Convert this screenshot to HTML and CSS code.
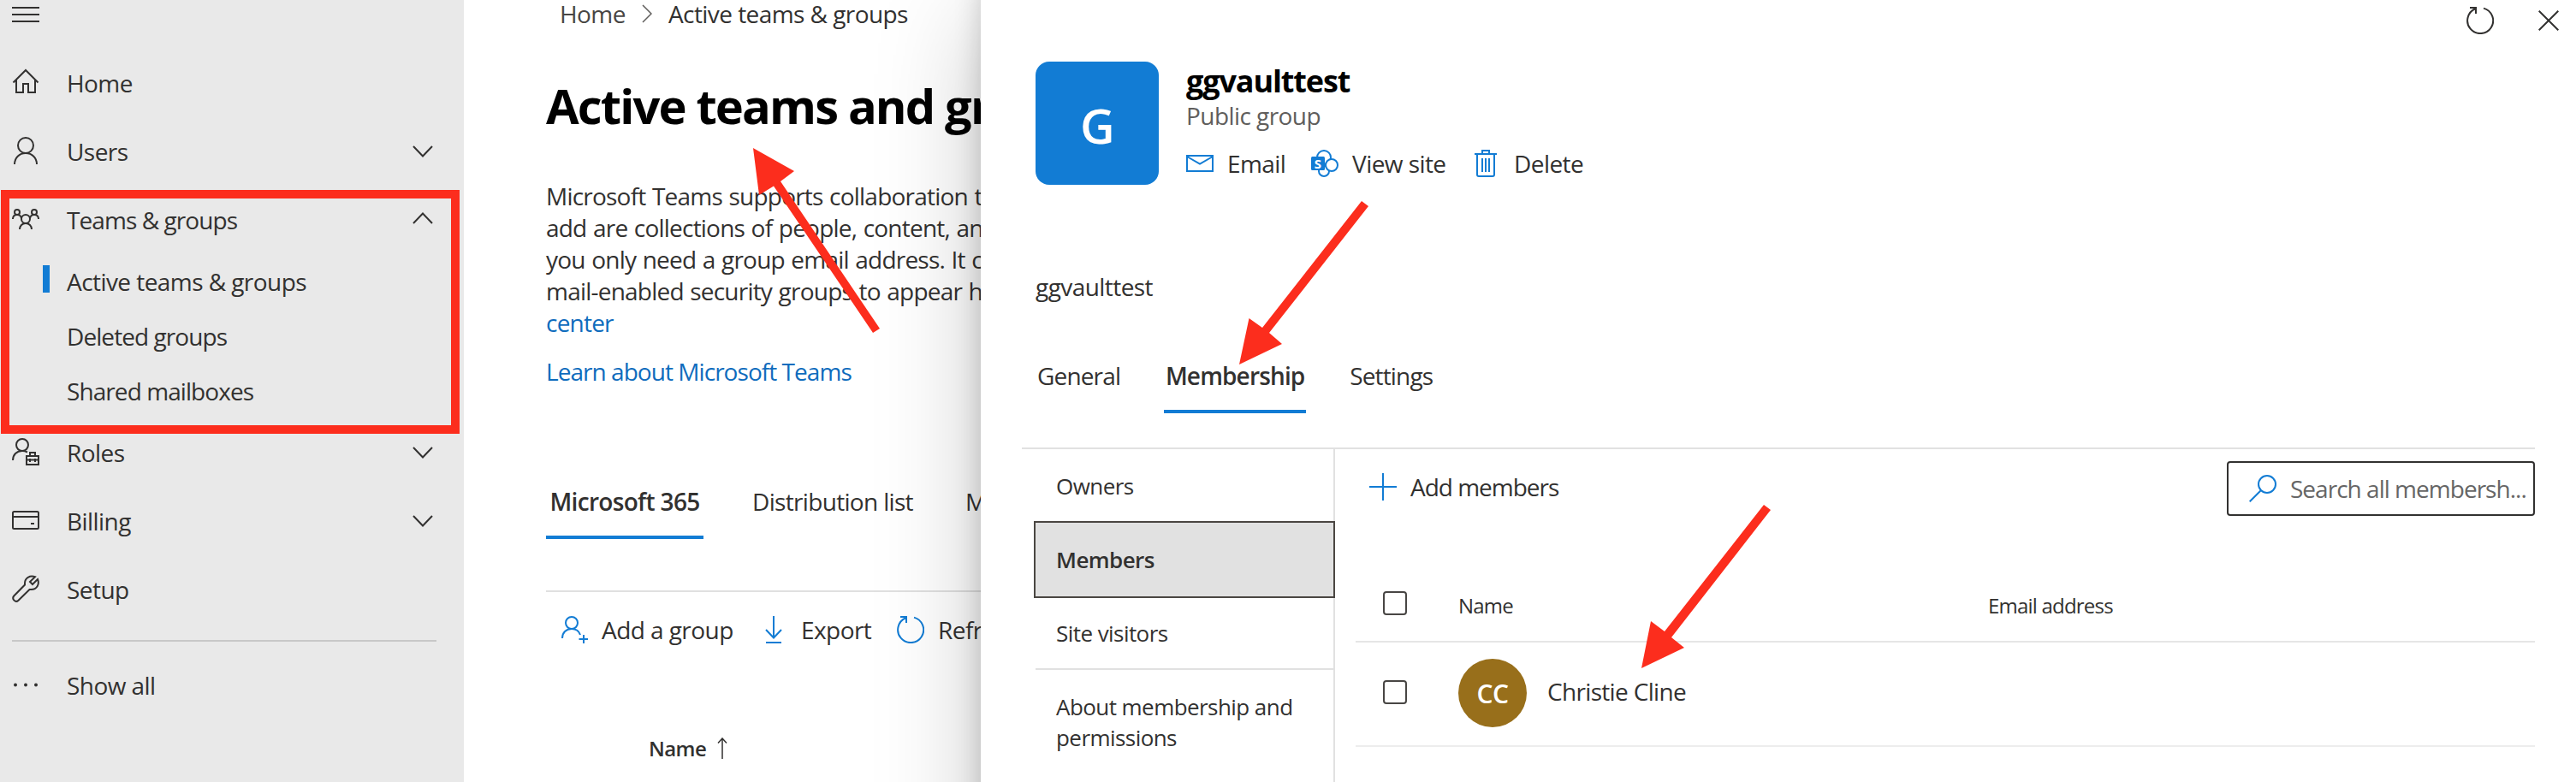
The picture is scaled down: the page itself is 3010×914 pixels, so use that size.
FILE: index.html
```html
<!DOCTYPE html>
<html lang="en">
<head>
    <meta charset="utf-8">
    <title>Active teams &amp; groups</title>
    <link rel="stylesheet" href="styles.css">
</head>
<body>
    <div class="app">
        <nav class="sidebar">
            <div class="menu-btn">
                <svg width="32" height="18"><path d="M0 1h32M0 9h32M0 17h32"/></svg>
            </div>
            <a class="nav-item">
                <svg class="nav-icon" width="32" height="32" viewBox="0 0 32 32"><path d="M1.500 16.500L16 2l14.500 14.500M5 13.500V28h8V18h6v10h8V13.500"/></svg>
                <span>Home</span>
            </a>
            <a class="nav-item">
                <svg class="nav-icon" width="32" height="32" viewBox="0 0 32 32"><circle cx="16" cy="10" r="9"/><path d="M3 32c0-7.500 5.500-13 13-13s13 5.500 13 13"/></svg>
                <span>Users</span>
                <svg class="chevron" width="24" height="14" viewBox="0 0 24 14"><path d="M1 1l11 11.500L23 1"/></svg>
            </a>
            <a class="nav-item">
                <svg class="nav-icon" width="32" height="32" viewBox="0 0 32 32"><circle cx="6" cy="8" r="3"/><circle cx="26" cy="8" r="3"/><circle cx="16" cy="16" r="5"/><path d="M1 16c0-3 2-5 5-5s4.500 1.500 5 4M31 16c0-3-2-5-5-5s-4.500 1.500-5 4M9 28c0-4 3-7 7-7s7 3 7 7"/></svg>
                <span class="tight">Teams &amp; groups</span>
                <svg class="chevron up" width="24" height="14" viewBox="0 0 24 14"><path d="M1 13L12 1.500 23 13"/></svg>
            </a>
            <a class="nav-sub active">Active teams &amp; groups</a>
            <a class="nav-sub tight">Deleted groups</a>
            <a class="nav-sub tight">Shared mailboxes</a>
            <a class="nav-item">
                <svg class="nav-icon" width="32" height="32" viewBox="0 0 32 32"><circle cx="12" cy="8" r="7"/><path d="M1 26c0-6.500 4.500-11 11-11 2.200 0 4 .5 6 1.500"/><path d="M17 21h14v10H17zM21 21v-4h6v4M17 25.500h14M21 24v4M27 24v4"/></svg>
                <span>Roles</span>
                <svg class="chevron" width="24" height="14" viewBox="0 0 24 14"><path d="M1 1l11 11.500L23 1"/></svg>
            </a>
            <a class="nav-item">
                <svg class="nav-icon" width="32" height="32" viewBox="0 0 32 32"><rect x="1" y="6" width="30" height="20" rx="1.500"/><path d="M1 12h30M22 20h4"/></svg>
                <span>Billing</span>
                <svg class="chevron" width="24" height="14" viewBox="0 0 24 14"><path d="M1 1l11 11.500L23 1"/></svg>
            </a>
            <a class="nav-item">
                <svg class="nav-icon" width="32" height="32" viewBox="0 0 32 32"><path d="M27 2.200C21 0 15 3.500 15 9.500v2L2.300 24.500c-3 3.500 1.700 8.500 5.200 5.200L20.500 17h2c6.500 0 10-6 7.500-12l-6 6-3-3z"/></svg>
                <span>Setup</span>
            </a>
            <div class="divider"></div>
            <a class="nav-item">
                <svg class="nav-icon dots" width="32" height="32" viewBox="0 0 32 32"><circle cx="4" cy="16.500" r="2"/><circle cx="16" cy="16.500" r="2"/><circle cx="28" cy="16.500" r="2"/></svg>
                <span>Show all</span>
            </a>
        </nav>

        <main class="main">
            <div class="breadcrumb">
                <span class="crumb">Home</span>
                <svg width="12" height="22" viewBox="0 0 12 22"><path d="M1 1l10 10L1 21"/></svg>
                <span>Active teams &amp; groups</span>
            </div>
            <h1>Active teams and groups</h1>
            <p class="intro">
                Microsoft Teams supports collaboration through<br>
                add are collections of people, content, and tools<br>
                you only need a group email address. It can take<br>
                mail-enabled security groups to appear here<br>
                <a>center</a>
            </p>
            <a class="learn">Learn about Microsoft Teams</a>
            <div class="tabs">
                <span class="tab selected">Microsoft 365</span>
                <span class="tab">Distribution list</span>
                <span class="tab">Mail-enabled security</span>
            </div>
            <div class="toolbar">
                <svg width="32" height="32" viewBox="0 0 32 32"><circle cx="13" cy="8" r="7"/><path d="M2 26c0-6.500 4.500-11 11-11 5 0 8.500 2.500 10 7M27 22v10M21.500 27h11"/></svg>
                <span class="t-add">Add a group</span>
                <svg width="20" height="32" viewBox="0 0 20 32"><path d="M10 0v25M1 16l9 9.500 9-9.500M1 31h18"/></svg>
                <span class="t-export">Export</span>
                <svg width="32" height="32" viewBox="0 0 32 32"><path d="M20 1.600A15 15 0 1 1 10.500 2.200M4 1h7v7"/></svg>
                <span>Refresh</span>
            </div>
            <div class="list-head">
                <span>Name</span>
                <svg width="12" height="25" viewBox="0 0 12 25"><path d="M6 25V1M1 6.500L6 1l5 5.500"/></svg>
            </div>
        </main>

        <section class="panel">
            <div class="panel-top">
                <svg width="32" height="32" viewBox="0 0 32 32"><path d="M20 1.600A15 15 0 1 1 10.500 2.200M4 1h7v7"/></svg>
                <svg width="24" height="24" viewBox="0 0 24 24"><path d="M.7.700l22.600 22.600M23.300.7L.7 23.300"/></svg>
            </div>
            <div class="hero">
                <div class="logo">G</div>
                <div>
                    <h2>ggvaulttest</h2>
                    <div class="kind">Public group</div>
                    <div class="actions">
                        <svg width="32" height="32" viewBox="0 0 32 32"><path d="M1 7h30v18H1zM1 8l15 8.500L31 8"/></svg>
                        <span class="a-email">Email</span>
                        <svg width="32" height="32" viewBox="0 0 32 32"><circle cx="15" cy="9" r="8"/><circle cx="15" cy="25" r="6"/><circle cx="24" cy="18" r="7"/><rect class="sp-box" x="0" y="8" width="16" height="16" rx="1.500"/><text x="3.800" y="21.500">S</text></svg>
                        <span class="a-site">View site</span>
                        <svg width="26" height="32" viewBox="0 0 26 32"><path d="M0 5h26M9 5V1h8v4M3 5v24q0 2 2 2h16q2 0 2-2V5M9 10v16M13 10v16M17 10v16"/></svg>
                        <span class="a-delete">Delete</span>
                    </div>
                </div>
            </div>
            <p class="group-desc">ggvaulttest</p>
            <div class="tabs panel-tabs">
                <span class="tab">General</span>
                <span class="tab selected">Membership</span>
                <span class="tab">Settings</span>
            </div>
            <div class="panel-body">
                <div class="side">
                    <a>Owners</a>
                    <a class="current">Members</a>
                    <a class="last">Site visitors</a>
                    <a class="about">About membership and permissions</a>
                </div>
                <div class="content">
                    <div class="commands">
                        <div class="add-members">
                            <svg width="32" height="32" viewBox="0 0 32 32"><path d="M16 0v32M0 16h32"/></svg>
                            <span>Add members</span>
                        </div>
                        <div class="search">
                            <svg width="32" height="32" viewBox="0 0 32 32"><circle cx="21" cy="11" r="10"/><path d="M14 18L.7 31.300"/></svg>
                            <span>Search all membersh...</span>
                        </div>
                    </div>
                    <div class="row head">
                        <i class="checkbox"></i>
                        <div class="col-name">Name</div>
                        <div>Email address</div>
                    </div>
                    <div class="row">
                        <i class="checkbox"></i>
                        <div class="col-name">
                            <span class="persona">CC</span>
                            <span class="person">Christie Cline</span>
                        </div>
                    </div>
                </div>
            </div>
        </section>

        <!-- callouts -->
        <div class="highlight"></div>
        <svg class="arrows" width="3010" height="914" viewBox="0 0 3010 914">
            <polygon points="880,173 928,200 912,212 1028,384 1020,389 904,217.500 887,228"/>
            <polygon points="1591,235 1599,241 1483,389 1498,402 1448,426 1459.500,372 1475,383"/>
            <polygon points="2061,590 2069,596 1953,745 1968,757 1918,781 1929,726 1945,738"/>
        </svg>
    </div>
</body>
</html>
```
FILE: styles.css
```css
* {
    box-sizing: border-box;
}
body {
    margin: 0;
    background: #fff;
    color: #323130;
    font-family: "Open Sans", "Noto Sans", sans-serif;
    font-size: 28px;
    letter-spacing: -0.02em;
    overflow: hidden;
}
svg {
    display: block;
    flex: none;
    fill: none;
    stroke: #323130;
    stroke-width: 2;
}
h1, h2, p {
    margin: 0;
}
.app {
    position: relative;
    display: flex;
    width: 3010px;
    height: 914px;
    overflow: hidden;
    white-space: nowrap;
}

/* left navigation */
.sidebar {
    width: 542px;
    flex: none;
    background: #e9e9e9;
}
.menu-btn {
    height: 57px;
    padding: 8px 14px;
}
.nav-item {
    display: flex;
    align-items: center;
    height: 80px;
    padding: 0 36px 0 14px;
}
.nav-item .nav-icon {
    margin: -2px 32px 0 0;
}
.nav-item .chevron {
    margin-left: auto;
}
.nav-item .chevron.up {
    margin-top: -4px;
}
.nav-sub {
    display: flex;
    align-items: center;
    height: 64px;
    padding-left: 78px;
}
.tight {
    letter-spacing: -0.033em;
}
.nav-sub.active {
    position: relative;
}
.nav-sub.active::before {
    content: "";
    position: absolute;
    left: 50px;
    top: 13px;
    width: 8px;
    height: 32px;
    background: #127cd4;
}
.dots {
    fill: #323130;
    stroke: none;
}
.divider {
    height: 2px;
    margin: 19px 32px 11px 14px;
    background: #c8c8c8;
}

/* page behind the panel */
.main {
    width: 604px;
    flex: none;
    padding-left: 96px;
    overflow: hidden;
}
.breadcrumb {
    display: flex;
    align-items: center;
    height: 32px;
    padding-left: 16px;
    line-height: 32px;
}
.breadcrumb svg {
    margin: 0 19px;
    stroke: #605e5c;
    stroke-width: 1.5;
}
.crumb {
    color: #484644;
}
h1 {
    margin-top: 55px;
    font-size: 56px;
    line-height: 72px;
    letter-spacing: -0.033em;
    color: #000;
}
.intro {
    margin-top: 52px;
    line-height: 37px;
    letter-spacing: -0.028em;
    word-spacing: 1px;
}
.intro a, .learn {
    color: #0f6cbd;
}
.learn {
    display: block;
    margin-top: 20px;
    line-height: 37px;
    letter-spacing: -0.034em;
}
.tabs {
    display: flex;
    gap: 53px;
    margin-top: 89px;
    letter-spacing: -0.024em;
}
.tab {
    flex: none;
    height: 88px;
    line-height: 88px;
    padding: 0 4px;
}
.tab.selected {
    position: relative;
    width: 184px;
    padding: 0;
    font-weight: 600;
    text-align: center;
}
.tab.selected::after {
    content: "";
    position: absolute;
    left: 0;
    right: 0;
    bottom: 0;
    height: 4px;
    background: #127cd4;
}
.toolbar {
    display: flex;
    align-items: center;
    height: 90px;
    margin-top: 60px;
    padding-left: 17px;
    border-top: 2px solid #e0e0e0;
}
.toolbar svg {
    stroke: #127cd4;
}
.toolbar span {
    flex: none;
    margin-left: 16px;
}
.toolbar .t-add {
    width: 191px;
}
.toolbar .t-export {
    width: 112px;
    margin-left: 22px;
}
.list-head {
    display: flex;
    align-items: center;
    gap: 13px;
    height: 80px;
    margin-top: 54px;
    padding-left: 120px;
    font-size: 24px;
    font-weight: 600;
}
.list-head svg {
    stroke-width: 1.5;
}

/* group details panel */
.panel {
    position: absolute;
    left: 1146px;
    right: 0;
    top: -32px;
    height: 1100px;
    padding: 32px 48px 0;
    background: #fff;
    box-shadow: 0 51px 115px rgba(0, 0, 0, 0.22), 0 10px 29px rgba(0, 0, 0, 0.18);
}
.panel-top {
    display: flex;
    justify-content: flex-end;
    align-items: center;
    gap: 52px;
    height: 48px;
    margin-right: -28px;
}
.hero {
    display: flex;
    gap: 32px;
    height: 144px;
    margin: 24px 0 0 16px;
}
.logo {
    width: 144px;
    height: 144px;
    border-radius: 16px;
    background: #127cd4;
    color: #fff;
    font-size: 56px;
    font-weight: 600;
    line-height: 148px;
    text-align: center;
}
h2 {
    margin-top: 1px;
    font-size: 36px;
    line-height: 44px;
    letter-spacing: -0.031em;
    color: #000;
}
.kind {
    line-height: 36px;
    color: #605e5c;
}
.actions {
    display: flex;
    align-items: center;
    height: 44px;
    margin-top: 16px;
}
.actions svg {
    stroke: #127cd4;
}
.actions span {
    margin-left: 16px;
}
.actions .a-email {
    width: 98px;
}
.actions .a-site {
    width: 143px;
}
.actions .a-delete {
    margin-left: 20px;
}
.actions .sp-box {
    fill: #127cd4;
    stroke: none;
}
.actions circle {
    fill: #fff;
}
.actions text {
    fill: #fff;
    stroke: none;
    font-size: 15px;
    font-weight: 700;
}
.group-desc {
    margin: 100px 0 0 16px;
    line-height: 38px;
}
.panel-tabs {
    gap: 47px;
    margin: 41px 0 0 14px;
    letter-spacing: -0.03em;
}
.panel-tabs .tab.selected {
    width: 166px;
}
.panel-body {
    display: flex;
    height: 600px;
    margin-top: 40px;
    border-top: 2px solid #e1e1e1;
}
.side {
    width: 350px;
    margin-left: 16px;
    flex: none;
    border-right: 2px solid #e1e1e1;
    font-size: 26px;
}
.side a {
    display: block;
    height: 86px;
    padding-left: 24px;
    line-height: 86px;
}
.side .current {
    outline: 2px solid #4a4642;
    background: #e1e1e1;
    font-weight: 600;
}
.side .last {
    border-bottom: 2px solid #e1e1e1;
}
.side .about {
    padding-top: 25px;
    line-height: 36px;
    white-space: normal;
}
.content {
    flex: 1;
    padding: 14px 0 0 24px;
}
.commands {
    display: flex;
    justify-content: space-between;
}
.add-members {
    display: flex;
    align-items: center;
    gap: 16px;
    height: 60px;
    padding-left: 16px;
    letter-spacing: -0.036em;
}
.add-members svg {
    stroke: #127cd4;
}
.search {
    display: flex;
    align-items: center;
    width: 360px;
    height: 64px;
    padding-left: 24px;
    border: 2px solid #323130;
    border-radius: 4px;
    color: #666;
    letter-spacing: -0.035em;
}
.search svg {
    margin-right: 16px;
    stroke: #127cd4;
}
.row {
    display: flex;
    align-items: center;
    height: 122px;
    padding-left: 32px;
    border-bottom: 2px solid #ededed;
}
.row.head {
    height: 86px;
    margin-top: 62px;
    border-color: #e6e6e6;
    font-size: 24px;
    letter-spacing: -0.033em;
}
.checkbox {
    width: 28px;
    height: 28px;
    margin: -4px 60px 0 0;
    border: 2px solid #484644;
    border-radius: 4px;
}
.col-name {
    display: flex;
    align-items: center;
    width: 619px;
}
.persona {
    width: 80px;
    height: 80px;
    margin: -2px 24px 0 0;
    border-radius: 50%;
    background: #986f1b;
    color: #fff;
    font-size: 30px;
    font-weight: 600;
    line-height: 82px;
    text-align: center;
}
.person {
    margin-top: -7px;
    letter-spacing: -0.024em;
}

/* callouts */
.highlight {
    position: absolute;
    left: 1px;
    top: 222px;
    width: 536px;
    height: 285px;
    border: 10px solid #fc2d1d;
}
.arrows {
    position: absolute;
    left: 0;
    top: 0;
    fill: #fc2d1d;
    stroke: none;
}
```
